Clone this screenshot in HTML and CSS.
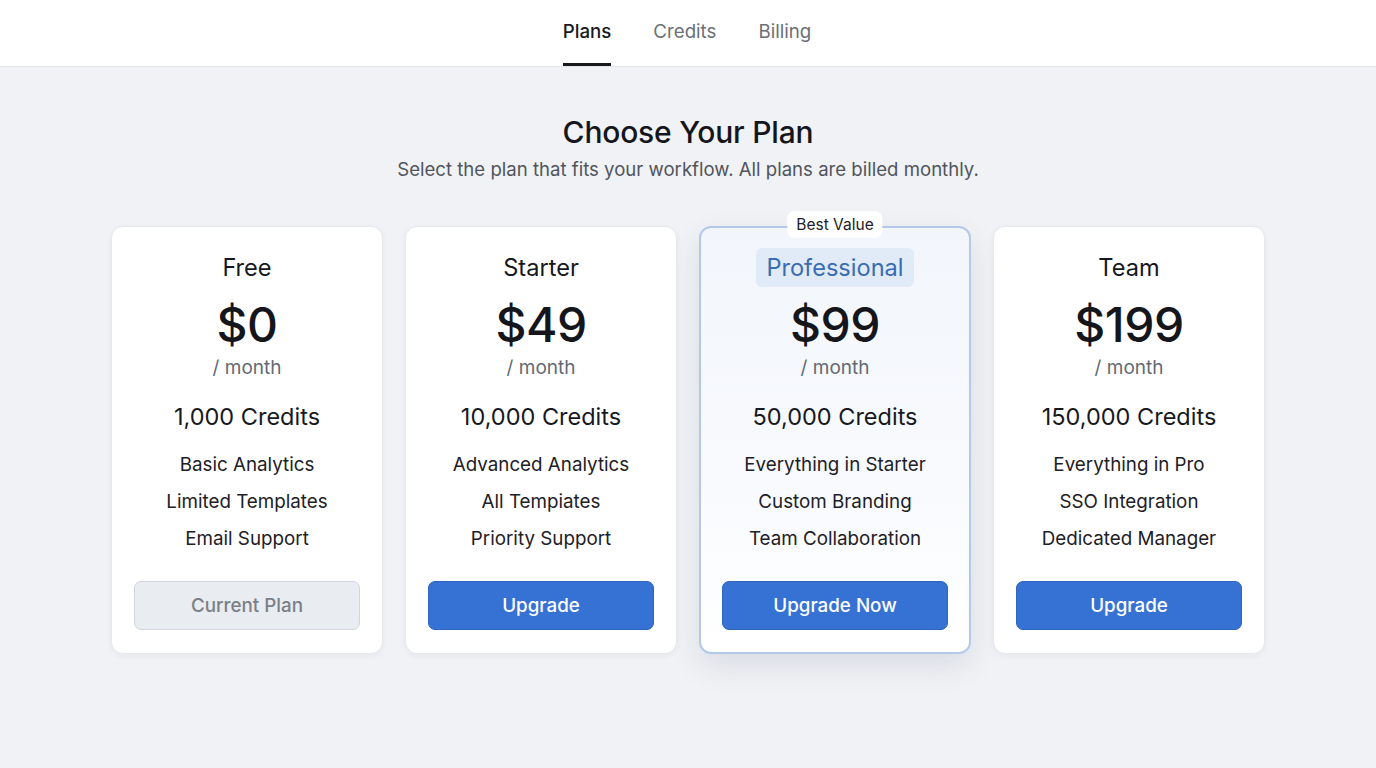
FILE: index.html
```html
<!DOCTYPE html>
<html lang="en">
<head>
<meta charset="utf-8">
<title>Choose Your Plan</title>
<link rel="stylesheet" href="styles.css">
</head>
<body>
<header class="topbar">
  <nav class="tabs">
    <a class="tab active">Plans</a>
    <a class="tab">Credits</a>
    <a class="tab">Billing</a>
  </nav>
</header>
<main class="main">
  <h1 class="title">Choose Your Plan</h1>
  <p class="subtitle">Select the plan that fits your workflow. All plans are billed monthly.</p>
  <section class="cards">
    <div class="card">
      <div class="name"><span class="name-text">Free</span></div>
      <div class="price">$0</div>
      <div class="period">/ month</div>
      <div class="credits">1,000 Credits</div>
      <ul class="features">
        <li>Basic Analytics</li>
        <li>Limited Templates</li>
        <li>Email Support</li>
      </ul>
      <button class="btn btn-current">Current Plan</button>
    </div>
    <div class="card">
      <div class="name"><span class="name-text">Starter</span></div>
      <div class="price">$49</div>
      <div class="period">/ month</div>
      <div class="credits">10,000 Credits</div>
      <ul class="features">
        <li>Advanced Analytics</li>
        <li>All Tempiates</li>
        <li>Priority Support</li>
      </ul>
      <button class="btn btn-primary">Upgrade</button>
    </div>
    <div class="card featured">
      <div class="badge">Best Value</div>
      <div class="name"><span class="name-text pill">Professional</span></div>
      <div class="price">$99</div>
      <div class="period">/ month</div>
      <div class="credits">50,000 Credits</div>
      <ul class="features">
        <li>Everything in Starter</li>
        <li>Custom Branding</li>
        <li>Team Collaboration</li>
      </ul>
      <button class="btn btn-primary">Upgrade Now</button>
    </div>
    <div class="card">
      <div class="name"><span class="name-text">Team</span></div>
      <div class="price">$199</div>
      <div class="period">/ month</div>
      <div class="credits">150,000 Credits</div>
      <ul class="features">
        <li>Everything in Pro</li>
        <li>SSO Integration</li>
        <li>Dedicated Manager</li>
      </ul>
      <button class="btn btn-primary">Upgrade</button>
    </div>
  </section>
</main>
</body>
</html>
```

FILE: styles.css
```css
* { box-sizing: border-box; }
html, body { margin: 0; padding: 0; }
body {
  font-family: Inter, "Noto Sans", "Liberation Sans", sans-serif;
  background: #f1f2f5;
  color: #16181d;
  min-height: 768px;
}
.topbar {
  height: 67px;
  background: #ffffff;
  border-bottom: 1px solid #e2e4e8;
  display: flex;
  justify-content: center;
}
.tabs {
  display: flex;
  gap: 42px;
  height: 66px;
  margin-left: -2px;
}
.tab {
  display: flex;
  align-items: center;
  font-size: 18.7px;
  color: #6b6f76;
  height: 66px;
  border-bottom: 3px solid transparent;
  cursor: pointer;
}
.tab.active {
  color: #17191e;
  font-weight: 500;
  border-bottom-color: #17191e;
}
.main {
  display: flex;
  flex-direction: column;
  align-items: center;
  padding-top: 46px;
}
.title {
  margin: 0;
  font-size: 30px;
  line-height: 38px;
  font-weight: 500;
  color: #14161b;
  letter-spacing: -0.2px;
}
.subtitle {
  margin: 6px 0 0;
  font-size: 18.6px;
  line-height: 24px;
  color: #50555d;
}
.cards {
  display: flex;
  gap: 22px;
  margin-top: 45px;
}
.card {
  position: relative;
  width: 272px;
  height: 428px;
  background: #ffffff;
  border: 1px solid #e6e8ec;
  border-radius: 12px;
  box-shadow: 0 2px 6px rgba(20, 30, 50, 0.05);
  padding: 21px 23px 0;
  display: flex;
  flex-direction: column;
  align-items: center;
}
.card.featured {
  background: linear-gradient(180deg, #f2f6fc 0%, #f8fafd 60%, #ffffff 100%);
  border: 2px solid #b4c9e8;
  padding-top: 20px;
  box-shadow: 0 12px 30px rgba(40, 70, 120, 0.12);
}
.badge {
  position: absolute;
  top: -17px;
  left: 50%;
  transform: translateX(-50%);
  background: #ffffff;
  border-radius: 7px;
  padding: 0 9px;
  height: 27px;
  line-height: 27px;
  font-size: 15.5px;
  color: #1d2026;
  white-space: nowrap;
}
.name {
  height: 39px;
  display: flex;
  align-items: center;
}
.name-text {
  font-size: 23.6px;
  line-height: 39px;
  padding: 0 10px;
  color: #16181d;
  border-radius: 6px;
}
.name-text.pill {
  background: #e1ebf8;
  color: #3a6cb3;
}
.price {
  margin-top: 10px;
  font-size: 48px;
  line-height: 56px;
  font-weight: 500;
  color: #14161b;
  letter-spacing: -0.5px;
}
.period {
  margin-top: 3px;
  font-size: 19px;
  line-height: 24px;
  color: #646971;
}
.credits {
  margin-top: 22px;
  font-size: 23.5px;
  line-height: 30px;
  font-weight: 400;
  color: #17191e;
}
.features {
  list-style: none;
  margin: 14px 0 0;
  padding: 0;
  text-align: center;
}
.features li {
  font-size: 18.8px;
  line-height: 37px;
  color: #1d2026;
}
.btn {
  margin-top: 24px;
  width: 226px;
  height: 49px;
  border-radius: 7px;
  font-family: inherit;
  font-size: 18.8px;
  font-weight: 500;
  cursor: pointer;
}
.btn-primary {
  background: #3672d4;
  border: 1px solid #2f65bd;
  color: #ffffff;
}
.btn-current {
  background: #e9ecf0;
  border: 1px solid #d2d6dc;
  color: #7a7f87;
}
```
